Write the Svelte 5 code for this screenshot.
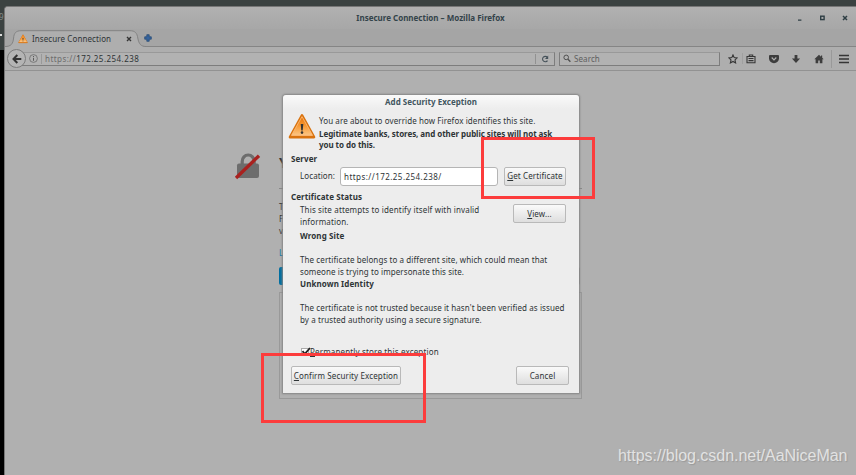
<script lang="ts">
	const address = '172.25.254.238';
	let location = `https://${address}/`;
	let permanent = true;

	const problems = [
		{
			title: 'Wrong Site',
			lines: [
				'The certificate belongs to a different site, which could mean that',
				'someone is trying to impersonate this site.'
			]
		},
		{
			title: 'Unknown Identity',
			lines: [
				"The certificate is not trusted because it hasn't been verified as issued",
				'by a trusted authority using a secure signature.'
			]
		}
	];
</script>

{#snippet warning(id: string)}
	<svg class="warning" viewBox="0 0 28 28">
		<defs>
			<linearGradient id={id} x1="0" y1="0" x2="0" y2="1">
				<stop offset="0" stop-color="#e8740a" />
				<stop offset="0.5" stop-color="#f79a35" />
				<stop offset="1" stop-color="#fcc684" />
			</linearGradient>
		</defs>
		<path d="M14 2.3 26 24.2H2Z" fill="#d9730f" stroke="#d9730f" stroke-width="2.6" stroke-linejoin="round" />
		<path d="M14 3.6 24.6 22.4H3.4Z" fill="url(#{id})" stroke="#ffc080" stroke-width="0.8" stroke-linejoin="round" />
		<path d="M12.7 11h2.6l-.6 6.5h-1.4z" fill="#333" />
		<circle cx="14" cy="19.6" r="1.3" fill="#333" />
	</svg>
{/snippet}

<div class="desktop">
	<div class="terminal"><span class="nine">9</span><span class="dot"></span></div>

	<div class="window">
		<header class="titlebar">
			<span class="window-title">Insecure Connection – Mozilla Firefox</span>
			<svg class="controls" width="56" height="10" viewBox="0 0 56 10">
				<path d="M2 7.2h3.4" stroke="#2e3e44" stroke-width="1.3" />
				<rect x="24.7" y="3.2" width="3.4" height="3.4" fill="none" stroke="#2e3e44" stroke-width="1.4" />
				<path d="M47 3l4 4m0-4-4 4" stroke="#2e3e44" stroke-width="1.5" />
			</svg>
		</header>

		<div class="tabs">
			<svg class="tab-shape" width="146" height="18" viewBox="0 0 146 18">
				<path d="M0 16.5C6 16.5 8 14 8.6 8 9 3 11 .7 16 .7H125c5 0 7 2.3 7.8 7.3C133.8 14 136 16.5 141 16.5V18H0Z" fill="#aeaeae" />
				<path d="M0 16.5C6 16.5 8 14 8.6 8 9 3 11 .7 16 .7H125c5 0 7 2.3 7.8 7.3C133.8 14 136 16.5 141 16.5" fill="none" stroke="#838383" />
			</svg>
			<div class="tab">
				{@render warning('tab-warning')}
				<span class="tab-title">Insecure Connection</span>
				<svg width="6" height="6" viewBox="0 0 6 6"><path d="M1 1l4 4m0-4-4 4" stroke="#343434" stroke-width="1.4" /></svg>
			</div>
			<svg class="new-tab" width="8" height="8" viewBox="0 0 8 8">
				<path d="M2.8.7h2.4v2.1h2.1v2.4H5.2v2.1H2.8V5.2H.7V2.8h2.1z" fill="#36639c" stroke="#234772" stroke-width=".7" />
			</svg>
		</div>

		<nav class="toolbar">
			<div class="back">
				<svg width="10" height="10" viewBox="0 0 10 10"><path d="M5.3 1 1.5 5l3.8 4M1.5 5H9.3" fill="none" stroke="#333" stroke-width="2" /></svg>
			</div>
			<div class="urlbar">
				<svg width="9" height="9" viewBox="0 0 9 9">
					<circle cx="4.5" cy="4.5" r="3.9" fill="none" stroke="#6c6c6c" stroke-width=".8" />
					<path d="M4.5 3.8v3M4.5 2v1" stroke="#5c5c5c" />
				</svg>
				<span class="url"><span class="scheme">https://</span>{address}</span>
				<span class="reload">
					<svg width="8" height="8" viewBox="0 0 8 8">
						<path d="M6.3 2.3A2.7 2.7 0 1 0 6.5 5.6" fill="none" stroke="#46525a" stroke-width="1.1" />
						<path d="M7.2.6v3.3H4Z" fill="#46525a" />
					</svg>
				</span>
			</div>
			<div class="search">
				<svg width="8" height="9" viewBox="0 0 8 9">
					<circle cx="3.2" cy="3.4" r="2.3" fill="none" stroke="#505050" />
					<path d="m5 5.2 2.4 2.5" stroke="#505050" stroke-width="1.4" />
				</svg>
				<span>Search</span>
			</div>
			<div class="tools">
				<svg width="10" height="10" viewBox="0 0 10 10"><path d="m5 .9 1.2 2.7 2.9.3L7 5.9l.6 3L5 7.4 2.4 8.9l.6-3L.9 3.9l2.9-.3Z" fill="none" stroke="#363636" stroke-width="1.1" /></svg>
				<span class="divider thin"></span>
				<svg width="10" height="10" viewBox="0 0 10 10"><path d="M1 2.5h8v6.2H1ZM3.3 2.2V1h3.4v1.2M2.5 4.5h5M2.5 6.6h5" fill="none" stroke="#363636" stroke-width="1.1" /></svg>
				<svg class="pocket" width="10" height="10" viewBox="0 0 10 10"><path d="M1 .9h8q1 0 1 1V4.5a5 4.7 0 0 1-10 0V1.9q0-1 1-1Z" fill="#3d3d3d" /><path d="m2.7 3.5 2.3 2.3 2.3-2.3" fill="none" stroke="#aeaeae" stroke-width="1.2" /></svg>
				<svg class="download" width="10" height="10" viewBox="0 0 10 10"><path d="M3.6 1h2.8v3.5h2.7L5 9 .9 4.5h2.7Z" fill="#3d3d3d" /></svg>
				<svg class="home" width="10" height="10" viewBox="0 0 10 10"><path d="M5 .7.3 5.3h1.3v4h2.6V6.5h1.6v2.8h2.6v-4h1.3L8.2 3.8V1.5H7v1.2Z" fill="#3d3d3d" /></svg>
				<span class="divider"></span>
				<svg class="menu" width="10" height="10" viewBox="0 0 10 10"><path d="M0 1.5h10M0 5h10M0 8.5h10" stroke="#363636" stroke-width="1.3" /></svg>
			</div>
		</nav>

		<main class="page">
			<svg class="lock" width="28" height="28" viewBox="0 0 28 28">
				<path d="M8.2 12V9.5a6 6.5 0 0 1 12 0V12" fill="none" stroke="#6d6d6d" stroke-width="3.2" />
				<rect x="3" y="11.5" width="22" height="14.5" rx="2" fill="#6d6d6d" />
				<path d="M2 26 25 3.7" stroke="#a9211f" stroke-width="3.3" />
			</svg>
			<section class="notice">
				<h1>Y</h1>
				<p>T</p>
				<p>F</p>
				<p>v</p>
				<a href="#more">L</a>
				<div class="notice-buttons"><span class="go-back"></span><span class="advanced"></span></div>
				<div class="details"></div>
			</section>
		</main>
	</div>

	<div class="dialog">
		<h2>Add Security Exception</h2>
		<div class="intro">
			{@render warning('dialog-warning')}
			<div class="intro-text">
				<p class="lead">You are about to override how Firefox identifies this site.</p>
				<p><b>Legitimate banks, stores, and other public sites will not ask</b></p>
				<p><b>you to do this.</b></p>
			</div>
		</div>

		<h3>Server</h3>
		<div class="server">
			<label for="location">Location:</label>
			<input id="location" bind:value={location} spellcheck="false" />
			<button class="get"><u>G</u>et Certificate</button>
		</div>

		<h3 class="status-title">Certificate Status</h3>
		<div class="status">
			<div class="copy">
				<p>This site attempts to identify itself with invalid</p>
				<p>information.</p>
			</div>
			<button class="view"><u>V</u>iew...</button>
		</div>
		{#each problems as problem}
			<div class="problem">
				<h4>{problem.title}</h4>
				{#each problem.lines as line}
					<p>{line}</p>
				{/each}
			</div>
		{/each}

		<div class="permanent">
			<span class="check">
				{#if permanent}
					<svg width="10" height="9" viewBox="0 0 10 9"><path d="m1.5 4.2 2.3 2.6L9 1" fill="none" stroke="#222" stroke-width="1.8" /></svg>
				{/if}
			</span>
			<span><u>P</u>ermanently store this exception</span>
		</div>
		<footer>
			<button class="confirm"><u>C</u>onfirm Security Exception</button>
			<button class="cancel">Cancel</button>
		</footer>
	</div>

	<div class="mark mark-get"></div>
	<div class="mark mark-confirm"></div>
	<div class="watermark">https://blog.csdn.net/AaNiceMan</div>
</div>

<style>
	:global(body) {
		margin: 0;
		overflow: hidden;
	}

	.desktop {
		position: relative;
		box-sizing: border-box;
		display: flex;
		width: 856px;
		height: 475px;
		padding-top: 6px;
		overflow: hidden;
		background: #3b4241;
		color: #2e3436;
		font-family: 'Noto Sans', 'Open Sans', sans-serif;
		font-size: 8px;
		line-height: 12px;
		letter-spacing: 0.09px;
	}

	svg {
		display: block;
		flex: none;
	}

	h1, h2, h3, h4, p {
		margin: 0;
		font-size: inherit;
		white-space: nowrap;
	}

	.terminal {
		width: 4px;
		flex: none;
		background: linear-gradient(#3b4241 44px, #000 44px);
		overflow: hidden;
	}

	.nine {
		display: block;
		margin: 5px 0 0 -1px;
		color: #858a89;
	}

	.dot {
		display: block;
		width: 2px;
		height: 2px;
		margin-top: 11px;
		background: #ddd;
	}

	.window {
		flex: 1;
		display: flex;
		flex-direction: column;
		box-sizing: border-box;
		border-top: 1px solid #777;
		border-left: 1px solid #777;
		border-radius: 4px 0 0 0;
		background: #b0b0b0;
		overflow: hidden;
	}

	.titlebar {
		display: grid;
		grid-template-columns: 1fr auto 1fr;
		align-items: center;
		height: 22px;
		background: linear-gradient(#b1b1b1, #a7a7a7);
	}

	.window-title {
		grid-column: 2;
		color: #33434a;
		font-weight: 700;
		letter-spacing: 0;
	}

	.controls {
		justify-self: end;
		margin-right: 4px;
	}

	.tabs {
		display: flex;
		height: 18px;
		box-sizing: border-box;
		background: linear-gradient(#858585, #858585) bottom / 100% 1px no-repeat #a5a5a5;
	}

	.tab-shape {
		margin-top: 1px;
	}

	.tab {
		display: flex;
		align-items: center;
		width: 114px;
		margin: 2px 0 0 -133px;
	}

	.tab .warning {
		width: 10px;
		height: 10px;
	}

	.tab-title {
		flex: 1;
		margin-left: 4px;
	}

	.new-tab {
		margin: 5px 0 0 12px;
	}

	.toolbar {
		display: flex;
		align-items: center;
		height: 24px;
		box-sizing: border-box;
		border-bottom: 1px solid #929292;
		background: #aeaeae;
	}

	.back {
		display: flex;
		align-items: center;
		justify-content: center;
		z-index: 1;
		width: 17px;
		height: 17px;
		margin-left: 2px;
		border: 1px solid #7c7c7c;
		border-radius: 50%;
		background: #b4b4b4;
	}

	.urlbar, .search {
		display: flex;
		align-items: center;
		height: 14px;
		box-sizing: border-box;
		border: 1px solid #7d7d7d;
		border-top-color: #999;
		background: #b2b2b2;
	}

	.urlbar {
		width: 533px;
		margin-left: -4px;
		padding-left: 6px;
	}

	.url {
		flex: 1;
		margin-left: 3px;
		padding-left: 3px;
		border-left: 1px solid #999;
		line-height: 10px;
		letter-spacing: 0.45px;
	}

	.scheme {
		color: #6c6c6c;
	}

	.reload {
		padding: 1px 5px;
		border-left: 1px solid #919191;
	}

	.search {
		width: 161px;
		margin-left: 4px;
		padding-left: 3px;
		gap: 3px;
		color: #606060;
	}

	.tools {
		display: flex;
		align-items: center;
		flex: 1;
		padding-left: 8px;
	}

	.divider {
		width: 1px;
		height: 18px;
		margin-left: 7px;
		background: #999;
	}

	.divider.thin {
		height: 11px;
		margin: 0 3px 0 4px;
		background: #a0a0a0;
	}

	.pocket, .download, .home {
		margin-left: 12.5px;
	}

	.menu {
		margin-left: 7px;
	}

	.page {
		display: flex;
		flex: 1;
		padding-left: 229px;
	}

	.lock {
		margin-top: 81px;
	}

	.notice {
		width: 303px;
		margin: 83px 0 0 17px;
	}

	h1 {
		height: 35px;
		box-sizing: border-box;
		margin-bottom: 12px;
		border-bottom: 1px solid #888;
		font-size: 14px;
		line-height: 17px;
	}

	.notice a {
		display: block;
		margin-top: 10px;
		color: #1075a5;
		text-decoration: none;
	}

	.notice-buttons {
		display: flex;
		justify-content: space-between;
		margin: 8px 2px 0 0;
	}

	.go-back, .advanced {
		width: 80px;
		height: 18px;
		border-radius: 2px;
		background: #006ea0;
	}

	.advanced {
		background: #888;
	}

	.details {
		height: 105px;
		margin-top: 7px;
		border: 1px solid #999;
	}

	.dialog {
		position: absolute;
		left: 283px;
		top: 95px;
		width: 296px;
		height: 298px;
		box-sizing: border-box;
		border-radius: 3px 3px 0 0;
		background: linear-gradient(#fafafa, #ededed 14px);
		box-shadow: 0 0 2px 1px #858585;
	}

	h2 {
		height: 14px;
		color: #42565f;
		line-height: 14px;
		text-align: center;
		letter-spacing: 0.03px;
	}

	.intro {
		display: flex;
		height: 48px;
		padding-left: 5px;
	}

	.intro .warning {
		width: 28px;
		height: 28px;
		margin-top: 4px;
	}

	.intro-text {
		margin: 6px 0 0 3px;
		line-height: 11px;
	}

	.intro-text b {
		letter-spacing: -0.06px;
	}

	.lead {
		margin-bottom: 2px;
	}

	h3 {
		padding-left: 8px;
		line-height: 12px;
	}

	.intro + h3 {
		margin-top: -4px;
	}

	.server {
		display: flex;
		align-items: center;
		height: 20px;
		margin-top: 1px;
		padding-left: 17px;
	}

	.server label {
		width: 40px;
	}

	input {
		width: 158px;
		height: 19px;
		box-sizing: border-box;
		padding: 0 3px;
		border: 1px solid #b5b5b5;
		border-radius: 3px;
		background: #fff;
		color: inherit;
		font: inherit;
		letter-spacing: 0.45px;
	}

	button {
		height: 19px;
		box-sizing: border-box;
		padding: 0;
		border: 1px solid #b9b9b9;
		border-radius: 2px;
		background: linear-gradient(#fafafa, #dedede);
		color: inherit;
		font: inherit;
		letter-spacing: 0.12px;
		white-space: nowrap;
	}

	.get {
		width: 62px;
		margin-left: 6px;
	}

	.status-title {
		margin-top: 5px;
	}

	.status {
		display: flex;
		justify-content: space-between;
		height: 26px;
		padding: 1px 13px 0 17px;
	}

	.copy {
		letter-spacing: 0.15px;
	}

	.view {
		width: 53px;
	}

	.problem {
		height: 48px;
		padding-left: 17px;
	}

	h4 {
		margin-bottom: 12px;
	}

	.permanent {
		display: flex;
		align-items: center;
		height: 12px;
		margin-top: 20px;
		padding-left: 18px;
		letter-spacing: 0.16px;
	}

	.check {
		width: 8px;
		height: 8px;
		box-sizing: border-box;
		margin-right: 1px;
		border: 1px solid #aaa;
		background: #fff;
	}

	.check svg {
		margin: -2px 0 0 -1px;
	}

	footer {
		display: flex;
		justify-content: space-between;
		margin-top: 8px;
		padding: 0 10px 0 8px;
	}

	.confirm {
		width: 110px;
	}

	.cancel {
		width: 53px;
	}

	.mark {
		position: absolute;
		box-sizing: border-box;
		border: 3px solid #fc3c3c;
	}

	.mark-get {
		left: 481px;
		top: 137px;
		width: 114px;
		height: 62px;
	}

	.mark-confirm {
		left: 261px;
		top: 353px;
		width: 165px;
		height: 70px;
	}

	.watermark {
		position: absolute;
		left: 618px;
		top: 447px;
		color: #e2e2e2;
		font: 16px/18px 'Liberation Sans', Arial, sans-serif;
		letter-spacing: -0.03px;
		text-shadow: 1px 1px 1px #999;
	}
</style>
